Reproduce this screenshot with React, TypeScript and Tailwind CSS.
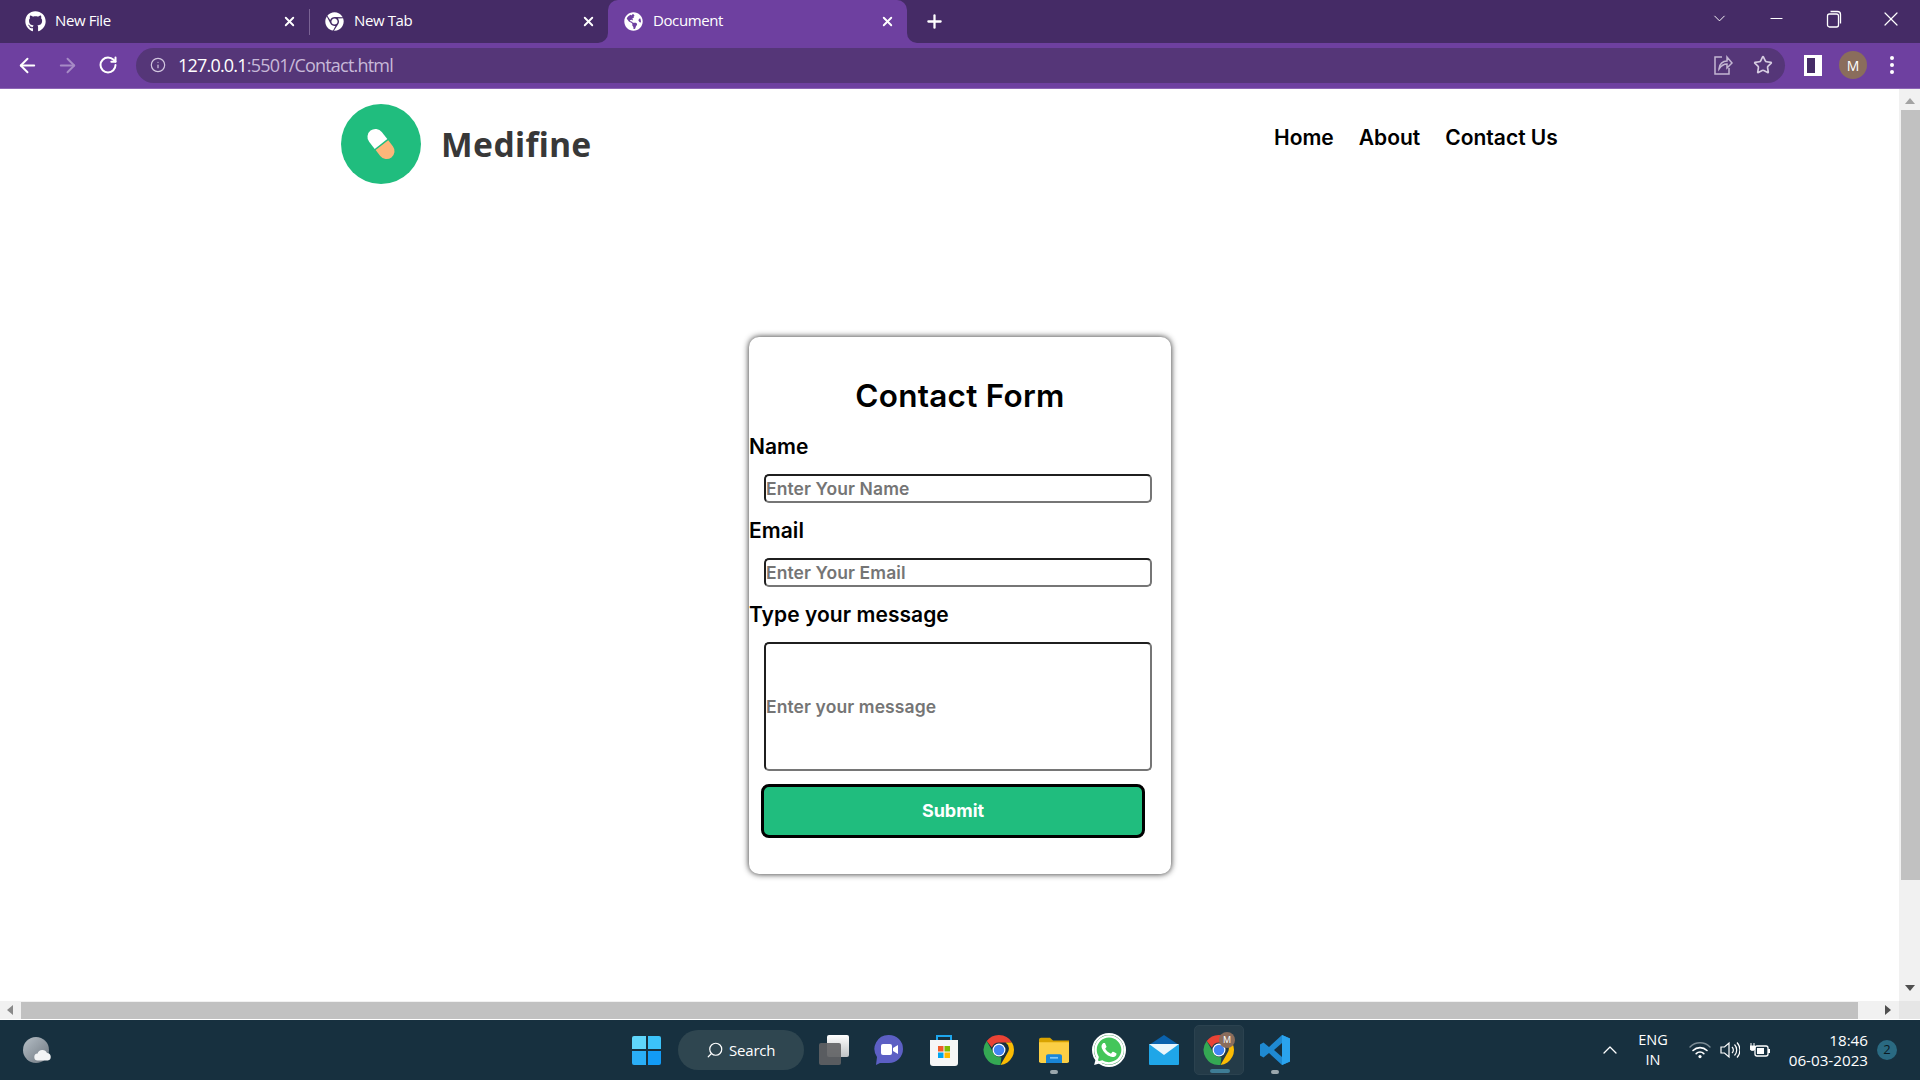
import React from "react";
import { ArrowLeft, ArrowRight, RotateCw, Info, Star, X, Plus, ChevronDown, ChevronUp, Minus, Search } from "lucide-react";
import { FaGithub, FaChrome, FaGlobeAmericas, FaWhatsapp } from "react-icons/fa";

const poppins = "font-['Inter','Liberation_Sans',sans-serif]";

function ChromeLogo({ size = 38 }: { size?: number }) {
  return (
    <svg width={size} height={size} viewBox="0 0 48 48">
      <path d="M24 4a20 20 0 0 1 17.3 10H24a10 10 0 0 0-9.4 6.6L7.6 12A20 20 0 0 1 24 4z" fill="#ea4335" />
      <path d="M41.3 14A20 20 0 0 1 26 43.9L34.6 29a10 10 0 0 0-1.9-15z" fill="#fbbc04" />
      <path d="M26 43.9A20 20 0 0 1 7.6 12l8.6 15a10 10 0 0 0 11 6.5z" fill="#34a853" />
      <circle cx="24" cy="24" r="8.6" fill="#fff" />
      <circle cx="24" cy="24" r="7" fill="#4285f4" />
    </svg>
  );
}

function Tab({ icon, label, width, inset, active }: { icon: React.ReactNode; label: string; width: string; inset: string; active?: boolean }) {
  return (
    <div className={`flex h-full items-center text-[15px] text-white ${inset} ${width} ${active ? "rounded-t-[10px] bg-[#6e40a0]" : ""}`}>
      <span className="flex w-[22px] shrink-0 justify-center">{icon}</span>
      <span className="ml-[9px] flex-1 -translate-y-px font-['Open_Sans',sans-serif] tracking-[-0.4px]">{label}</span>
      <X size={15} strokeWidth={3} className="mr-[12px]" />
    </div>
  );
}

function Field({ label, placeholder, tall }: { label: string; placeholder: string; tall?: boolean }) {
  return (
    <>
      <label className="block h-[30px] text-[21px] leading-[30px] font-semibold tracking-[0.05px] text-black">{label}</label>
      <input
        readOnly
        placeholder={placeholder}
        className={`mt-[12px] ml-[15px] block w-[388px] rounded-[5px] border-2 border-t-[#1f1f1f] border-r-[#767676] border-b-[#767676] border-l-[#1f1f1f] bg-white px-0 text-[17.5px] font-semibold tracking-[0.1px] outline-none placeholder:text-[#757575] ${tall ? "h-[129px]" : "h-[29px]"}`}
      />
    </>
  );
}

function TrayWifi() {
  return (
    <svg width="22" height="18" viewBox="0 0 22 18" fill="none" strokeLinecap="round">
      <path d="M1 6a14 14 0 0 1 20 0" stroke="#7c8b94" strokeWidth="1.4" />
      <path d="M4 9.5a10 10 0 0 1 14 0" stroke="#fff" strokeWidth="1.6" />
      <path d="M7.2 12.6a5.4 5.4 0 0 1 7.6 0" stroke="#fff" strokeWidth="1.6" />
      <circle cx="11" cy="15.6" r="1.6" fill="#fff" />
    </svg>
  );
}

export default function App() {
  return (
    <div className="flex h-[1080px] w-[1920px] flex-col overflow-hidden bg-white font-['Open_Sans',sans-serif]">
      {/* tab strip */}
      <div className="flex h-[43px] shrink-0 bg-[#6e40a0]">
        <div className="flex w-[608px] items-center rounded-br-[10px] bg-[#452b66]">
          <Tab inset="pl-[24px]" width="w-[309px]" label="New File" icon={<FaGithub size={21} className="text-white" />} />
          <div className="h-[26px] w-px bg-[#7a6394]" />
          <Tab inset="pl-[13px]" width="w-[298px]" label="New Tab" icon={<FaChrome size={19} className="text-white" />} />
        </div>
        <div className="h-full w-[299px] bg-[#452b66]">
          <Tab active inset="pl-[14px]" width="w-[299px]" label="Document" icon={<FaGlobeAmericas size={19} className="text-white" />} />
        </div>
        <div className="flex flex-1 items-center rounded-bl-[10px] bg-[#452b66] pr-[20px]">
          <Plus size={21} strokeWidth={2.6} className="ml-[17px] text-white" />
          <ChevronDown size={19} strokeWidth={1.2} className="ml-[765px] -translate-y-[3px] text-white" />
          <Minus size={19} strokeWidth={1.4} className="ml-[38px] -translate-y-[3px] text-white" />
          <svg width="16" height="18" viewBox="0 0 16 18" fill="none" stroke="#fff" strokeWidth="1.3" className="ml-[40px] -translate-y-[3px]">
            <rect x="1.5" y="4" width="11" height="13" rx="2" />
            <path d="M4.5 1.5h7a3 3 0 0 1 3 3v9" />
          </svg>
          <X size={24} strokeWidth={1.2} className="ml-[37px] -translate-y-[3px] text-white" />
        </div>
      </div>

      {/* toolbar */}
      <div className="flex h-[46px] shrink-0 items-center border-b border-[#8d66b5] bg-[#6e40a0] pb-[1px]">
        <ArrowLeft size={23} strokeWidth={2} className="ml-[16px] text-white" />
        <ArrowRight size={23} strokeWidth={2} className="ml-[17px] text-[#a78bc6]" />
        <RotateCw size={20} strokeWidth={2.4} className="ml-[19px] text-white" />
        <div className="ml-[18px] flex h-[35px] w-[1649px] items-center rounded-full bg-[#553678] pl-[14px]">
          <Info size={16} strokeWidth={1.8} className="text-[#d2c6df]" />
          <span className="ml-[12px] text-[18px] tracking-[-0.8px] text-white">
            127.0.0.1<span className="text-[#c7b9d8]">:5501/Contact.html</span>
          </span>
          <svg width="20" height="22" viewBox="0 0 20 22" fill="none" stroke="#c3b6d2" strokeWidth="1.5" className="ml-auto">
            <path d="M9 3H2v17h14v-6" />
            <path d="M6 15c0-5 4-8 8-8V3l5 6-5 5v-4c-3 0-6 2-8 5z" />
          </svg>
          <Star size={20} strokeWidth={2} className="mr-[12px] ml-[20px] text-[#d6cce1]" />
        </div>
        <div className="ml-[19px] flex h-[21px] w-[18px] justify-start border-[3px] border-r-[7px] border-white bg-[#452b66]" />
        <div className="ml-[17px] flex h-[28px] w-[28px] items-center justify-center rounded-full bg-[#8a6d5c] text-[14px] text-white">M</div>
        <div className="ml-[23px] flex flex-col gap-[3px]">
          <div className="h-[4px] w-[4px] rounded-full bg-white" />
          <div className="h-[4px] w-[4px] rounded-full bg-white" />
          <div className="h-[4px] w-[4px] rounded-full bg-white" />
        </div>
      </div>

      {/* viewport */}
      <div className="flex min-h-0 flex-1">
        <div className={`min-w-0 flex-1 ${poppins}`}>
          <header className="flex items-start">
            <div className="mt-[15px] ml-[341px] flex h-[80px] w-[80px] items-center justify-center rounded-full bg-[#20bd7e]">
              <svg width="36" height="38" viewBox="0 0 36 38">
                <g transform="rotate(-38 18 19)">
                  <path d="M10 19V10a8 8 0 0 1 16 0v9z" fill="#fff" />
                  <path d="M10 20.5h16V28a8 8 0 0 1-16 0z" fill="#fdb67a" />
                </g>
              </svg>
            </div>
            <div className="mt-[33px] ml-[20px] w-[149px] font-['Noto_Sans',sans-serif] text-[33.5px] leading-[44px] font-bold tracking-[0.4px] whitespace-nowrap text-[#383838]">Medifine</div>
            <nav className="mt-[33px] ml-[684px] flex gap-[25px] text-[21px] leading-[31px] font-semibold text-black">
              <span>Home</span>
              <span>About</span>
              <span>Contact Us</span>
            </nav>
          </header>

          <div className="mt-[153px] ml-[749px] h-[537px] w-[422px] rounded-[10px] bg-white pt-[36px] shadow-[0_0_6px_rgba(0,0,0,0.85)]">
            <h1 className="mb-[13px] h-[46px] text-center text-[31.5px] leading-[46px] font-semibold tracking-[0.25px] text-black">Contact Form</h1>
            <div>
              <Field label="Name" placeholder="Enter Your Name" />
              <div className="h-[13px]" />
              <Field label="Email" placeholder="Enter Your Email" />
              <div className="h-[13px]" />
              <Field tall label="Type your message" placeholder="Enter your message" />
              <button className="mt-[13px] ml-[12px] block h-[54px] w-[384px] rounded-[8px] border-[3px] border-black bg-[#20bd7e] pb-[2px] text-[18px] font-bold text-white">
                Submit
              </button>
            </div>
          </div>
        </div>

        {/* vertical scrollbar */}
        <div className="flex w-[21px] shrink-0 flex-col items-center bg-[#f1f1f1]">
          <div className="mt-[9px] h-0 w-0 border-x-[5px] border-b-[6px] border-x-transparent border-b-[#a3a3a3]" />
          <div className="mt-[6px] ml-[2px] h-[770px] w-[19px] bg-[#c1c1c1]" />
          <div className="mt-[105px] h-0 w-0 border-x-[5px] border-t-[6px] border-x-transparent border-t-[#505050]" />
        </div>
      </div>

      {/* horizontal scrollbar */}
      <div className="flex h-[18px] shrink-0 items-center bg-[#f1f1f1]">
        <div className="ml-[7px] h-0 w-0 border-y-[5px] border-r-[6px] border-y-transparent border-r-[#8a8a8a]" />
        <div className="ml-[8px] h-[17px] w-[1837px] bg-[#c1c1c1]" />
        <div className="ml-[27px] h-0 w-0 border-y-[5px] border-l-[6px] border-y-transparent border-l-[#505050]" />
        <div className="ml-auto h-full w-[21px] bg-[#e6e6e6]" />
      </div>
      <div className="h-px shrink-0 bg-white" />

      {/* taskbar */}
      <div className="flex h-[60px] shrink-0 items-center bg-[#17303f] font-['Open_Sans',sans-serif] text-white">
        <div className="relative ml-[23px] h-[26px] w-[26px] rounded-full bg-gradient-to-br from-[#b7c0c7] to-[#6e7780]">
          <svg width="18" height="12" viewBox="0 0 18 12" className="absolute top-[12px] left-[11px]">
            <path d="M4 11.5a3.5 3.5 0 0 1-.4-7A5 5 0 0 1 13 4a3.8 3.8 0 0 1 .8 7.5z" fill="#f3f4f5" />
          </svg>
        </div>

        <div className="ml-[583px] grid h-[29px] w-[29px] grid-cols-2 gap-[2px]">
          <div className="rounded-tl-[2px] bg-[#5fd6fb]" />
          <div className="rounded-tr-[2px] bg-[#3cc3fa]" />
          <div className="rounded-bl-[2px] bg-[#2aaef7]" />
          <div className="rounded-br-[2px] bg-[#129bf6]" />
        </div>

        <div className="ml-[17px] flex h-[40px] w-[126px] items-center rounded-full bg-[#2f4650] pl-[28px] text-[15px] tracking-[-0.2px]">
          <Search size={18} strokeWidth={1.6} className="-scale-x-100" />
          <span className="ml-[5px]">Search</span>
        </div>

        {/* task view */}
        <div className="relative ml-[15px] h-[30px] w-[30px]">
          <div className="absolute top-0 right-0 h-[22px] w-[22px] rounded-[2px] bg-gradient-to-b from-white to-[#bfc3c5]" />
          <div className="absolute bottom-0 left-0 h-[22px] w-[22px] rounded-[2px] bg-[#606264]/90" />
        </div>

        {/* chat */}
        <svg width="30" height="32" viewBox="0 0 30 32" className="ml-[25px]">
          <path d="M15 1a14 14 0 0 1 0 28H6l-4 2 1-8A14 14 0 0 1 15 1z" fill="#5c5fc4" />
          <rect x="7" y="10" width="11" height="11" rx="2" fill="#fff" />
          <path d="M19 14l5-3v9l-5-3z" fill="#fff" />
        </svg>

        {/* store */}
        <svg width="30" height="32" viewBox="0 0 30 32" className="ml-[25px]">
          <path d="M8 6V2h14v4" fill="none" stroke="#1ea7ee" strokeWidth="2" />
          <path d="M1 6h28v23a3 3 0 0 1-3 3H4a3 3 0 0 1-3-3z" fill="#f6f6f6" />
          <rect x="9" y="12" width="5.5" height="5.5" fill="#ef5a2a" />
          <rect x="15.5" y="12" width="5.5" height="5.5" fill="#7fba00" />
          <rect x="9" y="18.5" width="5.5" height="5.5" fill="#00a4ef" />
          <rect x="15.5" y="18.5" width="5.5" height="5.5" fill="#ffb900" />
        </svg>

        <div className="ml-[22px]"><ChromeLogo size={36} /></div>

        {/* files */}
        <div className="relative ml-[22px] h-[44px] w-[30px] pt-[9px]">
          <svg width="30" height="26" viewBox="0 0 30 30" preserveAspectRatio="none">
            <path d="M0 3a2 2 0 0 1 2-2h9l3 3h16v5H0z" fill="#d9a300" />
            <path d="M0 6h30v22a2 2 0 0 1-2 2H2a2 2 0 0 1-2-2z" fill="#fbcf45" />
            <path d="M7 22a2 2 0 0 1 2-2h12a2 2 0 0 1 2 2v8H7z" fill="#1986d8" />
            <rect x="11" y="23" width="8" height="2" fill="#7fc6f5" />
          </svg>
          <div className="absolute -bottom-[2px] left-[11px] h-[4px] w-[8px] rounded-full bg-[#9aa7ad]" />
        </div>

        {/* whatsapp */}
        <div className="ml-[25px] flex h-[30px] w-[30px] items-center justify-center rounded-full bg-[#44c65a] outline-[2px] outline-white">
          <FaWhatsapp size={34} className="text-white" />
        </div>

        {/* mail */}
        <svg width="30" height="30" viewBox="0 0 30 30" className="ml-[25px]">
          <path d="M15 0l15 10v4H0v-4z" fill="#0a62ad" />
          <rect y="9" width="30" height="21" rx="1" fill="#1fa6e8" />
          <path d="M0 9h30L15 20z" fill="#e9f6fc" />
        </svg>

        {/* active chrome */}
        <div className="relative ml-[15px] flex h-[50px] w-[50px] items-center justify-center rounded-[5px] border border-[#2b424f] bg-[#243b48]">
          <ChromeLogo size={36} />
          <div className="absolute top-[6px] right-[8px] flex h-[16px] w-[16px] items-center justify-center rounded-full bg-[#8a6d5c] text-[9px]">M</div>
          <div className="absolute bottom-[1px] left-[15px] h-[4px] w-[20px] rounded-full bg-[#3e7d95]" />
        </div>

        {/* vscode */}
        <div className="relative ml-[16px] h-[44px] w-[30px] pt-[7px]">
          <svg width="30" height="30" viewBox="0 0 30 30">
            <path d="M22 0l8 3.5v23L22 30 9 18l-5.5 4.500L0 20.500V9.500L3.500 7.500 9 12z" fill="#1f8ad2" />
            <path d="M22 8l-8 7 8 7z" fill="#17303f" />
            <path d="M22 0l8 3.500v23L22 30z" fill="#2aa3ee" />
          </svg>
          <div className="absolute -bottom-[2px] left-[11px] h-[4px] w-[8px] rounded-full bg-[#9aa7ad]" />
        </div>

        <ChevronUp size={24} strokeWidth={1.3} className="ml-[308px]" />
        <div className="ml-[11px] w-[40px] text-center text-[14.5px] leading-[20px]">ENG<br />IN</div>
        <div className="ml-[16px]"><TrayWifi /></div>
        <svg width="20" height="18" viewBox="0 0 20 18" fill="none" stroke="#fff" strokeWidth="1.2" className="ml-[9px]">
          <path d="M1 6h3.500L9 2v14l-4.500-4H1z" />
          <path d="M12 6a4 4 0 0 1 0 6M14.500 3.500a8 8 0 0 1 0 11M17 1.500a11 11 0 0 1 0 15" />
        </svg>
        <svg width="20" height="16" viewBox="0 0 20 16" className="ml-[10px]">
          <path d="M1 1v3M4 1v3M0 4h5v2a2.500 2.500 0 0 1-5 0z" stroke="#fff" fill="#fff" strokeWidth="1" />
          <rect x="5" y="4" width="13" height="10" rx="2" fill="none" stroke="#fff" strokeWidth="1.300" />
          <rect x="7" y="6" width="7" height="6" fill="#fff" />
          <rect x="18" y="7" width="2" height="4" fill="#fff" />
        </svg>
        <div className="ml-[8px] w-[90px] text-right text-[15.200px] leading-[20px]">18:46<br />06-03-2023</div>
        <div className="ml-[9px] flex h-[20px] w-[20px] items-center justify-center rounded-full bg-[#2a6a82] text-[13px] text-[#0b1a22]">2</div>
      </div>
    </div>
  );
}
